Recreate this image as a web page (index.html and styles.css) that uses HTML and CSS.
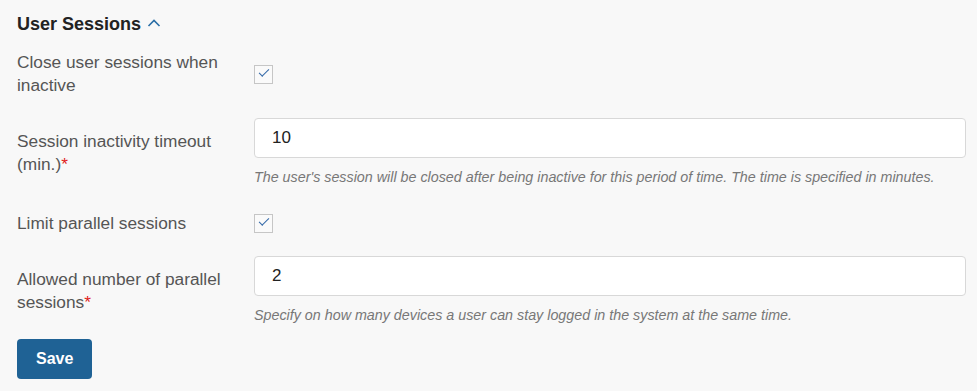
FILE: index.html
```html
<!DOCTYPE html>
<html lang="en">
<head>
    <meta charset="UTF-8">
    <title>User Sessions</title>
    <link rel="stylesheet" href="styles.css">
</head>
<body>
    <div class="settings">
        <div class="section-title">
            User Sessions
            <svg class="chevron" width="14" height="10" viewBox="0 0 14 10"><path d="M1.5 8 L7 2.5 L12.5 8" fill="none" stroke="#2a6ea6" stroke-width="1.6"/></svg>
        </div>

        <div class="row row-check">
            <div class="label">Close user sessions when inactive</div>
            <div class="field"><span class="checkbox checked"></span></div>
        </div>

        <div class="row row-input">
            <div class="label label-input">Session inactivity timeout (min.)<span class="req">*</span></div>
            <div class="field">
                <input class="input" type="text" value="10">
                <div class="hint">The user's session will be closed after being inactive for this period of time. The time is specified in minutes.</div>
            </div>
        </div>

        <div class="row row-check">
            <div class="label">Limit parallel sessions</div>
            <div class="field"><span class="checkbox checked"></span></div>
        </div>

        <div class="row row-input">
            <div class="label label-input">Allowed number of parallel sessions<span class="req">*</span></div>
            <div class="field">
                <input class="input" type="text" value="2">
                <div class="hint">Specify on how many devices a user can stay logged in the system at the same time.</div>
            </div>
        </div>

        <button class="button">Save</button>
    </div>
</body>
</html>
```

FILE: styles.css
```css
body { margin: 0; background: #f8f8f8; font-family: "Liberation Sans", Arial, sans-serif; color: #555; }
.settings { padding: 12px 11px 0 17px; }
.section-title { font-size: 18px; font-weight: bold; color: #222; line-height: 24px; display: flex; align-items: center; gap: 6px; margin-bottom: 15px; }
.chevron { margin-top: -3px; }
.row { display: flex; align-items: flex-start; margin-bottom: 21px; }
.row-check { align-items: center; }
.row-input { margin-bottom: 27px; }
.label { width: 237px; flex-shrink: 0; font-size: 17.3px; line-height: 23px; padding-right: 8px; box-sizing: border-box; }
.label-input { padding-top: 12px; }
.req { color: #e02020; }
.field { flex: 1; }
.checkbox { display: block; width: 19px; height: 19px; box-sizing: border-box; border: 1px solid #c6c6c6; background: #fafafa; position: relative; }
.checkbox.checked::after { content: ""; position: absolute; left: 4px; top: 3px; width: 9px; height: 4px; border-left: 1.4px solid #3469a8; border-bottom: 1.4px solid #3469a8; transform: rotate(-45deg); }
.input { display: block; width: 100%; height: 40px; box-sizing: border-box; border: 1px solid #d8d8d8; border-radius: 4px; background: #fff; padding: 0 17px; font-family: inherit; font-size: 17px; color: #222; outline: none; }
.hint { margin-top: 11px; font-size: 14.3px; line-height: 16px; font-style: italic; color: #777; }
.button { margin-top: -12px; padding: 0 19px; height: 40px; border: none; border-radius: 4px; background: #1f6295; color: #fff; font-family: inherit; font-size: 16px; font-weight: bold; cursor: pointer; }
```
